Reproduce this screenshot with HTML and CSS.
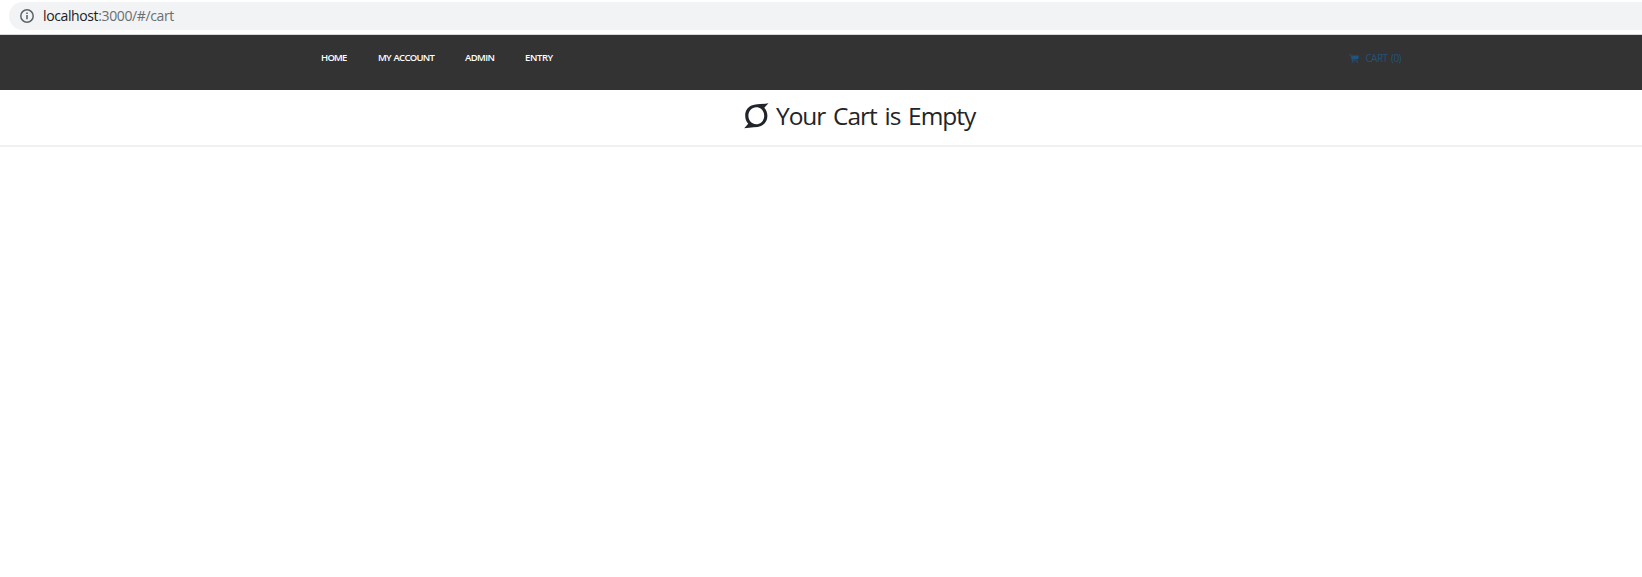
FILE: index.html
```html
<!DOCTYPE html>
<html lang="en">
<head>
<meta charset="utf-8">
<title>Cart</title>
<link rel="stylesheet" href="styles.css">
</head>
<body>
<div class="browser-bar">
  <div class="address">
    <svg class="info" viewBox="0 0 14 14"><circle cx="7" cy="7" r="6.2" fill="none" stroke="currentColor" stroke-width="1.5"/><path d="M6.2 6h1.6v4.3H6.2zM6.2 3.500h1.6v1.6H6.2z" fill="currentColor"/></svg>
    <span class="url"><span class="host">localhost</span>:3000/#/cart</span>
  </div>
</div>
<nav class="navbar">
  <div class="container">
    <a class="home">HOME</a>
    <a class="account">MY ACCOUNT</a>
    <a class="admin">ADMIN</a>
    <a class="entry">ENTRY</a>
    <a class="cart"><svg class="cart-icon" viewBox="0 0 10 9"><path d="M0 .4h2l.3 1H10l-.6 3.700-6 .7.2.6h5.500v.8H2.800l.1-1L1.500 1.300H0z" fill="currentColor"/><circle cx="3.500" cy="8" r=".8" fill="currentColor"/><circle cx="8.300" cy="8" r=".8" fill="currentColor"/></svg><span>CART (0)</span></a>
  </div>
</nav>
<main class="cart-message">
  <svg class="logo" viewBox="0 0 25 26"><path fill="currentColor" fill-rule="evenodd" d="M24.500 .2C18 1.400 12 .8 7.500 2.600C3.500 4.400 1.200 8 1.200 12.500C1.200 16 2.300 18.700 4.200 20.800L.2 25.200C7 24.200 13 24.600 17 23C21 21.200 23.400 17.500 23.400 13C23.400 9.700 22.300 6.800 20.300 4.700ZM12.300 4.200C16.800 4.200 20.200 7.900 20.200 12.700C20.200 17.500 16.800 21.200 12.300 21.200C7.800 21.200 4.400 17.500 4.400 12.700C4.400 7.900 7.800 4.200 12.300 4.200Z"/></svg>
  <h1>Your Cart is Empty</h1>
</main>
</body>
</html>
```
FILE: styles.css
```css
* { box-sizing: border-box; }
body { margin: 0; background: #fff; font-family: "Open Sans", sans-serif; overflow: hidden; }
.browser-bar { height: 35px; padding: 2px 0 0 9px; border-bottom: 1px solid #d5d7da; }
.address { display: flex; align-items: center; height: 28px; padding-left: 11px; gap: 9px; background: #f1f3f4; border-radius: 14px 0 0 14px; color: #5f6368; }
.info { width: 14px; height: 14px; }
.url { font: 14px/20px "Open Sans", sans-serif; letter-spacing: -.38px; color: #6b6f73; white-space: nowrap; }
.host { color: #202124; }
.navbar { height: 55px; background: #333; }
.container { display: flex; width: 1080px; margin-left: 321px; padding-top: 15px; gap: 30px; }
.container a { color: #fff; font: 600 9.5px/16px "Open Sans", sans-serif; white-space: nowrap; }
.home { width: 27px; letter-spacing: -.65px; }
.container .account { width: 57px; letter-spacing: -.75px; word-spacing: 1px; }
.container .home { letter-spacing: -.75px; }
.admin { width: 30px; letter-spacing: -.6px; }
.entry { letter-spacing: -.4px; }
.container .cart { display: flex; align-items: center; gap: 6px; margin-left: auto; color: #23527c; font-size: 10px; font-weight: 400; letter-spacing: -.55px; word-spacing: 1.5px; }
.cart-icon { width: 10px; height: 9px; }
.cart-message { display: flex; height: 57px; padding: 13px 0 0 744px; gap: 7px; border-bottom: 2px solid #f1f1f1; color: #212529; }
.logo { width: 25px; height: 26px; }
h1 { margin: 0; font: 400 24.5px/26px "Open Sans", sans-serif; letter-spacing: -1.05px; word-spacing: 2.5px; white-space: nowrap; }
```
